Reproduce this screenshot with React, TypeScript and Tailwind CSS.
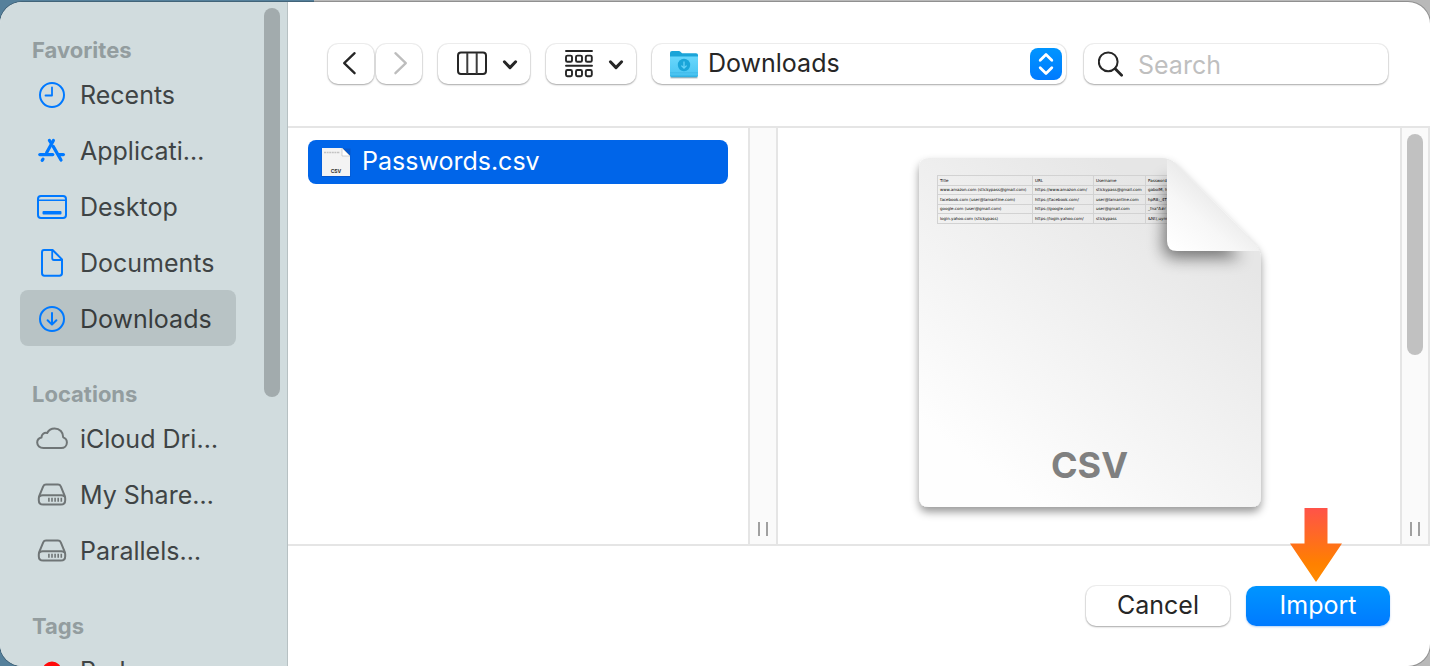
import type { ReactNode } from "react";

const BLUE = "#0079ff";

function Svg({ children, size = 32, color = BLUE }: { children: ReactNode; size?: number; color?: string }) {
  return (
    <svg
      width={size}
      height={size}
      viewBox="0 0 32 32"
      fill="none"
      stroke={color}
      strokeWidth="2"
      strokeLinecap="round"
      strokeLinejoin="round"
      aria-hidden="true"
      className="shrink-0"
    >
      {children}
    </svg>
  );
}

const clockIcon = (
  <Svg>
    <circle cx="16" cy="17" r="12" />
    <path d="M16 9.5V17.5H9.5" strokeWidth="1.8" />
  </Svg>
);

const appsIcon = (
  <Svg>
    <g strokeWidth="3.2">
      <path d="M17.4 6.4L10.6 18.8" />
      <path d="M13.4 6.4L15.2 9.2" />
      <path d="M17.2 12.4L25 26" />
      <path d="M3.8 20.6H16.8" />
      <path d="M22.8 20.6H27.4" />
      <path d="M7 25.2L6.2 26.4" />
    </g>
  </Svg>
);

const desktopIcon = (
  <Svg>
    <rect x="2" y="6" width="28" height="22" rx="3" />
    <path d="M2.5 10.2H29.5" strokeWidth="1.6" />
    <rect x="6.5" y="21" width="19" height="3.6" rx="1" fill={BLUE} stroke="none" />
  </Svg>
);

const documentIcon = (
  <Svg>
    <path d="M8 4H16.6L26 13.4V27Q26 29.8 23.4 29.8H8.4Q6 29.8 6 27V6.4Q6 4 8 4Z" />
    <path d="M16.2 4.5V12Q16.2 14 18 14H25.5" strokeWidth="1.8" />
  </Svg>
);

const downloadIcon = (
  <Svg>
    <circle cx="16" cy="17" r="12" />
    <path d="M16 11V22.4M11.6 18.2L16 22.6L20.4 18.2" />
  </Svg>
);

const cloudIcon = (
  <Svg color="#6f7576">
    <path
      d="M7.4 26C3.8 26 1.2 23.7 1.2 20.6C1.2 18 3 16 5.5 15.5C5.4 12.5 8.3 10.1 11.2 11C12.6 8.2 15.4 6.5 18.6 6.5C23.6 6.5 27.4 10.3 27.2 15.4C29.5 16.2 30.9 18.1 30.9 20.5C30.9 23.6 28.4 26 25.2 26Z"
      strokeWidth="2"
    />
  </Svg>
);

const driveIcon = (
  <Svg color="#6f7576">
    <g strokeWidth="2">
      <path d="M10 6.6H22Q24 6.6 24.8 8.4L28.6 17.6Q29.2 19 29.2 20.6V22.2Q29.2 26.6 24.8 26.6H7.2Q2.8 26.6 2.8 22.2V20.6Q2.8 19 3.4 17.6L7.2 8.4Q8 6.6 10 6.6Z" />
      <path d="M3.4 18.4Q4.8 17.2 6.8 17.2H25.2Q27.2 17.2 28.6 18.4" />
    </g>
    <path d="M12.9 19.8V23.8M16 19.8V23.8M19.1 19.8V23.8M22.2 19.8V23.8M25.3 19.8V23.8" strokeWidth="1.6" strokeLinecap="butt" />
  </Svg>
);

const redTagIcon = (
  <Svg>
    <circle cx="16" cy="17" r="9.5" fill="#ff0a0a" stroke="none" />
  </Svg>
);

const sections = [
  {
    title: "Favorites",
    items: [
      { label: "Recents", icon: clockIcon },
      { label: "Applicati…", icon: appsIcon },
      { label: "Desktop", icon: desktopIcon },
      { label: "Documents", icon: documentIcon },
      { label: "Downloads", icon: downloadIcon, active: true },
    ],
  },
  {
    title: "Locations",
    items: [
      { label: "iCloud Dri…", icon: cloudIcon },
      { label: "My Share…", icon: driveIcon },
      { label: "Parallels…", icon: driveIcon },
    ],
  },
  { title: "Tags", items: [{ label: "Red", icon: redTagIcon }] },
];

function Sidebar() {
  return (
    <nav aria-label="Places" className="relative w-72 shrink-0 overflow-hidden border-r border-[#b7c1c3] bg-[#d1dcde]">
      {sections.map((section) => (
        <section key={section.title} className="pt-8 pr-[51px] pl-5">
          <h2 className="flex h-8 items-center pl-3 text-[22px] font-[650] text-[#939d9f]">{section.title}</h2>
          <ul>
            {section.items.map((item) => (
              <li key={item.label}>
                <a
                  href="#"
                  className={
                    "active" in item && item.active
                      ? "flex h-14 items-center gap-3 rounded-lg bg-[#b8c3c5] pl-4 text-[25px] font-[430] whitespace-nowrap text-[#383c3d]"
                      : "flex h-14 items-center gap-3 rounded-lg pl-4 text-[25px] font-[430] whitespace-nowrap text-[#3f4445]"
                  }
                >
                  {item.icon}
                  <span className="pt-1">{item.label}</span>
                </a>
              </li>
            ))}
          </ul>
        </section>
      ))}
      <div className="absolute top-1.5 right-[7px] h-[389px] w-4 rounded-full bg-[#a2abad]" />
    </nav>
  );
}

const raised =
  "h-10 shrink-0 rounded-[10px] bg-white shadow-[0_0_0_1px_rgba(0,0,0,0.06),0_1px_2px_rgba(0,0,0,0.3)]";

function Chevron() {
  return (
    <svg width="16" height="12" viewBox="0 0 16 12" fill="none" stroke="#262626" strokeWidth="3" strokeLinecap="round" strokeLinejoin="round" aria-hidden="true">
      <path d="M2.4 3.8L8 9.6L13.6 3.8" />
    </svg>
  );
}

function Toolbar() {
  return (
    <header className="flex items-start gap-4 border-b-2 border-[#e5e5e5] pt-[42px] pr-[42px] pb-[42px] pl-10">
      <div className="flex gap-0.5">
        <button type="button" aria-label="Back" className={`${raised} flex w-[46px] items-center justify-center`}>
          <svg width="20" height="26" viewBox="0 0 20 26" fill="none" stroke="#262626" strokeWidth="2.3" strokeLinecap="round" strokeLinejoin="round">
            <path d="M13.6 2.2L3.2 12.2L13.6 22.2" />
          </svg>
        </button>
        <button type="button" aria-label="Forward" disabled className={`${raised} flex w-[46px] items-center justify-center`}>
          <svg width="20" height="26" viewBox="0 0 20 26" fill="none" stroke="#bdbdbd" strokeWidth="2.3" strokeLinecap="round" strokeLinejoin="round">
            <path d="M6.4 2.2L16.8 12.2L6.4 22.2" />
          </svg>
        </button>
      </div>
      <button type="button" aria-label="Column view" className={`${raised} flex w-[92px] items-center justify-between pr-3 pl-[19px]`}>
        <svg width="30" height="26" viewBox="0 0 30 26" fill="none" stroke="#262626" strokeWidth="2" aria-hidden="true">
          <rect x="1" y="1.6" width="28" height="21.4" rx="3" />
          <path d="M10.3 2V23M19.7 2V23" stroke="#3d3d3d" />
        </svg>
        <Chevron />
      </button>
      <button type="button" aria-label="Group items" className={`${raised} flex w-[90px] items-center justify-between pr-3 pl-[19px]`}>
        <svg width="28" height="28" viewBox="0 0 28 28" fill="none" stroke="#262626" strokeWidth="1.9" strokeLinecap="round" aria-hidden="true">
          <path d="M1 1H27M1 15.8H27" />
          <rect x="1" y="5.6" width="6" height="6.2" rx="1.4" />
          <rect x="11" y="5.6" width="6" height="6.2" rx="1.4" />
          <rect x="20.8" y="5.6" width="6" height="6.2" rx="1.4" />
          <rect x="1" y="20" width="6" height="6.2" rx="1.4" />
          <rect x="11" y="20" width="6" height="6.2" rx="1.4" />
          <rect x="20.8" y="20" width="6" height="6.2" rx="1.4" />
        </svg>
        <Chevron />
      </button>
      <div className="relative min-w-0 flex-1">
        <select aria-label="Folder" className={`${raised} block w-full appearance-none pr-12 pl-14 text-[25px] font-[430] text-[#262626]`}>
          <option>Downloads</option>
        </select>
        <svg width="30" height="30" viewBox="0 0 30 30" aria-hidden="true" className="pointer-events-none absolute top-1.5 left-[17px]">
          <defs>
            <linearGradient id="folder" x1="0" y1="0" x2="0" y2="1">
              <stop offset="0" stopColor="#69d7fc" />
              <stop offset="0.85" stopColor="#4cc6f3" />
              <stop offset="1" stopColor="#27a9dc" />
            </linearGradient>
          </defs>
          <path d="M1 3Q1 1 3 1H9.5Q11 1 12 2.2L13 3.2H27Q29 3.2 29 5V26H1Z" fill="#1ba4d8" />
          <path d="M1 6.4H29V25.5Q29 27.4 27 27.4H3Q1 27.4 1 25.5Z" fill="url(#folder)" />
          <path d="M1.5 27.8H28.5" stroke="#8aa5b0" strokeWidth="1" />
          <path d="M1 22.8H29" stroke="#3bb6e6" strokeWidth="0.8" />
          <circle cx="15" cy="15" r="6.2" fill="#1aa5d9" />
          <path d="M15 11.6V18M12.4 15.6L15 18.2L17.6 15.6" fill="none" stroke="#66d2f8" strokeWidth="1.3" />
        </svg>
        <span className="pointer-events-none absolute top-1 right-1 flex size-8 items-center justify-center rounded-lg bg-linear-to-b from-[#0095ff] to-[#007aff]">
          <svg width="16" height="24" viewBox="0 0 16 24" fill="none" stroke="#fff" strokeWidth="2.8" strokeLinecap="round" strokeLinejoin="round" aria-hidden="true">
            <path d="M2.2 8.2L8 2.6L13.8 8.2M2.2 15.8L8 21.4L13.8 15.8" />
          </svg>
        </span>
      </div>
      <label className={`${raised} ml-0.5 flex w-[304px] items-center gap-3.5 overflow-hidden pl-3.5`}>
        <svg width="26" height="26" viewBox="0 0 26 26" fill="none" stroke="#262626" strokeLinecap="round" aria-hidden="true" className="shrink-0">
          <circle cx="10.2" cy="10.8" r="9.4" strokeWidth="2" />
          <path d="M17.2 17.8L23.6 24.2" strokeWidth="2.8" />
        </svg>
        <input type="search" aria-label="Search" placeholder="Search" className="min-w-0 flex-1 bg-transparent pt-1 text-[25px] font-[430] outline-none placeholder:text-[#bfbfbf]" />
      </label>
    </header>
  );
}

function Gutter({ children }: { children?: ReactNode }) {
  return (
    <div className="flex w-[30px] shrink-0 flex-col items-center justify-between border-x-2 border-[#e5e5e5] bg-[#fafafa] pt-1.5 pb-2">
      {children ?? <span />}
      <div className="h-3.5 w-2.5 border-x-2 border-[#a0a0a0]" />
    </div>
  );
}

function SmallDocIcon() {
  return (
    <svg width="32" height="32" viewBox="0 0 32 32" aria-hidden="true" className="shrink-0">
      <path d="M1.5 2.5H30.5V31H1.5Z" fill="#0a47a8" opacity="0.45" />
      <path d="M2 2H22L30 10V30H2Z" fill="#f3f3f3" />
      <path d="M22 2L30 10H22Z" fill="#fff" stroke="#b5b5b5" strokeWidth="0.6" />
      <path d="M4 6.5H20" stroke="#c3c3c3" strokeWidth="1.6" strokeDasharray="2 0.6" />
      <text x="16" y="27" textAnchor="middle" fontSize="5" fontWeight="700" fill="#333">CSV</text>
    </svg>
  );
}

const rows = [
  ["www.amazon.com (stickypass@gmail.com)", "https://www.amazon.com/", "stickypass@gmail.com", "gaboiM, h"],
  ["facebook.com (user@lamantine.com)", "https://facebook.com/", "user@lamantine.com", "hpR8;_4T"],
  ["google.com (user@gmail.com)", "https://google.com/", "user@gmail.com", "_fna\"A#r"],
  ["login.yahoo.com (stickypass)", "https://login.yahoo.com/", "stickypass", "&Nt(,uym"],
];

function DocumentPreview() {
  return (
    <figure className="relative h-[349px] w-[342px] shrink-0">
      <svg viewBox="0 0 342 349" className="block size-full overflow-visible" aria-hidden="true">
        <defs>
          <linearGradient id="page" x1="0.2" y1="0.9" x2="0.75" y2="0.15">
            <stop offset="0" stopColor="#fefefe" />
            <stop offset="0.5" stopColor="#f2f2f2" />
            <stop offset="1" stopColor="#e6e6e6" />
          </linearGradient>
          <linearGradient id="fold" x1="0.1" y1="1" x2="0.65" y2="0.35">
            <stop offset="0" stopColor="#ffffff" />
            <stop offset="0.5" stopColor="#f7f7f7" />
            <stop offset="1" stopColor="#e6e6e6" />
          </linearGradient>
          <filter id="pageShadow" x="-10%" y="-10%" width="120%" height="120%">
            <feDropShadow dx="0" dy="5" stdDeviation="4.5" floodColor="#000" floodOpacity="0.4" />
          </filter>
          <filter id="foldShadow" x="-40%" y="-40%" width="180%" height="180%">
            <feGaussianBlur stdDeviation="8" />
          </filter>
          <clipPath id="pageClip">
            <path d="M10 0H243Q250 0 256 5L336 86Q342 92 342 102V339Q342 349 332 349H10Q0 349 0 339V10Q0 0 10 0Z" />
          </clipPath>
        </defs>
        <path d="M10 0H243Q250 0 256 5L336 86Q342 92 342 102V339Q342 349 332 349H10Q0 349 0 339V10Q0 0 10 0Z" fill="url(#page)" filter="url(#pageShadow)" />
        <text x="170.5" y="319.5" textAnchor="middle" fontSize="36" fontWeight="650" fill="#808080">CSV</text>
      </svg>
      <div className="absolute top-[17px] left-[18px] w-[230px] overflow-hidden">
        <table className="w-[246px] table-fixed border-collapse font-['DejaVu_Sans'] text-[4px] leading-[8px] text-black">
          <colgroup>
            <col className="w-[95px]" />
            <col className="w-[61px]" />
            <col className="w-[52px]" />
            <col className="w-[38px]" />
          </colgroup>
          <thead>
            <tr className="h-[10px]">
              {["Title", "URL", "Username", "Password"].map((h) => (
                <th key={h} scope="col" className="border border-[#d2d2d2] p-0 pl-0.5 text-left font-normal">{h}</th>
              ))}
            </tr>
          </thead>
          <tbody>
            {rows.map((row) => (
              <tr key={row[0]} className="h-[9px] even:h-[10px]">
                {row.map((cell) => (
                  <td key={cell} className="border border-[#d2d2d2] p-0 pl-0.5 whitespace-nowrap">{cell}</td>
                ))}
              </tr>
            ))}
          </tbody>
        </table>
      </div>
      <svg viewBox="0 0 342 349" className="pointer-events-none absolute inset-0 size-full overflow-visible" aria-hidden="true">
        <g clipPath="url(#pageClip)">
          <path d="M248 18L322 100H258Q244 100 244 88Z" fill="#000" opacity="0.5" filter="url(#foldShadow)" />
        </g>
        <path d="M248 1.5Q252 2 256 5L336 86Q339 89 340.5 93H258Q248 93 248 83Z" fill="url(#fold)" />
      </svg>
    </figure>
  );
}

export default function App() {
  return (
    <div className="h-screen overflow-hidden bg-[linear-gradient(90deg,#55809b_314px,#b9b9b9_314px)] pt-0.5 font-[Inter,'Liberation_Sans',sans-serif]">
      <div role="dialog" aria-label="Open file" className="flex h-full overflow-hidden rounded-[22px] bg-white shadow-[0_0_0_1px_rgba(0,0,0,0.22)]">
        <Sidebar />
        <div className="flex min-w-0 flex-1 flex-col">
          <Toolbar />
          <main className="flex min-h-0 flex-1">
            <ul className="min-w-0 flex-1 px-5 pt-3">
              <li>
                <a href="#" className="flex h-11 items-center gap-2.5 rounded-lg bg-[#0065e9] pl-3 text-[25px] font-[430] text-white">
                  <SmallDocIcon />
                  Passwords.csv
                </a>
              </li>
            </ul>
            <Gutter />
            <div className="flex w-[622px] shrink-0 justify-center pt-[30px] pl-0.5">
              <DocumentPreview />
            </div>
            <Gutter>
              <div className="h-[221px] w-4 rounded-full bg-[#c1c1c1]" />
            </Gutter>
          </main>
          <footer className="flex justify-end gap-4 border-t-2 border-[#e5e5e5] pt-10 pr-10 pb-10">
            <button type="button" className={`${raised} w-36 text-[25px] font-[430] text-[#262626]`}>
              Cancel
            </button>
            <div className="relative">
              <button type="button" className="h-10 w-36 rounded-[10px] bg-linear-to-b from-[#0095ff] to-[#007aff] text-[25px] font-[430] text-white shadow-[0_1px_2px_rgba(0,100,220,0.3)]">
                Import
              </button>
              <svg width="52" height="74" viewBox="0 0 52 74" aria-hidden="true" className="absolute -top-[78px] left-11">
                <defs>
                  <linearGradient id="arrow" x1="0" y1="0" x2="0" y2="1">
                    <stop offset="0" stopColor="#ff5349" />
                    <stop offset="0.75" stopColor="#ff8000" />
                    <stop offset="1" stopColor="#ff8c00" />
                  </linearGradient>
                </defs>
                <path d="M14.5 0H37.5V35.5H52L26 74L0 35.5H14.5Z" fill="url(#arrow)" />
              </svg>
            </div>
          </footer>
        </div>
      </div>
    </div>
  );
}
